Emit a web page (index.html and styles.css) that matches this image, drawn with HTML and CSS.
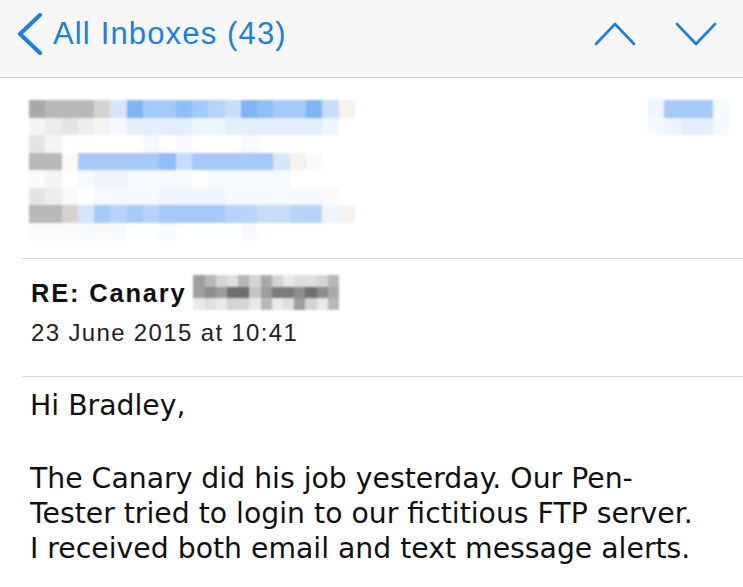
FILE: index.html
```html
<!DOCTYPE html>
<html>
<head>
<meta charset="utf-8">
<link rel="stylesheet" href="styles.css">
</head>
<body>
<header class="topbar">
  <div class="back">
    <svg class="back-icon" width="28" height="42" viewBox="0 0 28 42"><polyline points="24,2 4,21 24,40" fill="none" stroke="#1c7ee6" stroke-width="4" stroke-linecap="round" stroke-linejoin="round"/></svg>
    <span class="back-label">All Inboxes (43)</span>
  </div>
  <div class="nav">
    <svg class="nav-icon" width="42" height="24" viewBox="0 0 42 24"><polyline points="2,22 21,2 40,22" fill="none" stroke="#1c7ee6" stroke-width="2.6" stroke-linecap="round" stroke-linejoin="round"/></svg>
    <svg class="nav-icon" width="42" height="24" viewBox="0 0 42 24"><polyline points="2,2 21,22 40,2" fill="none" stroke="#1c7ee6" stroke-width="2.6" stroke-linecap="round" stroke-linejoin="round"/></svg>
  </div>
</header>

<section class="sender">
  <div class="mosaic left">
    <i class="gA"></i><i class="gB"></i><i class="gB"></i><i class="gB"></i><i class="gC"></i><i class="bF"></i><i class="bA"></i><i class="bC"></i><i class="bC"></i><i class="bB"></i><i class="bC"></i><i class="bD"></i><i class="bE"></i><i class="bA"></i><i class="bB"></i><i class="bC"></i><i class="bC"></i><i class="bA"></i><i class="bE"></i><i class="tA"></i>
    <i class="gF"></i><i class="gE"></i><i class="gD"></i><i class="gE"></i><i class="gF"></i><i class="bI"></i><i class="bG"></i><i class="bG"></i><i class="bG"></i><i class="bG"></i><i class="bH"></i><i class="bH"></i><i class="bG"></i><i class="bG"></i><i class="bG"></i><i class="bG"></i><i class="bG"></i><i class="bG"></i><i class="bH"></i><i></i>
    <i class="gD"></i><i class="gF"></i><i></i><i></i><i></i><i></i><i></i><i class="bI"></i><i></i><i class="bI"></i><i></i><i></i><i></i><i class="bI"></i><i></i><i></i><i></i><i></i><i></i><i></i>
    <i class="gB"></i><i class="gB"></i><i class="gW"></i><i class="bC"></i><i class="bC"></i><i class="bC"></i><i class="bC"></i><i class="bC"></i><i class="bB"></i><i class="bE"></i><i class="bC"></i><i class="bC"></i><i class="bC"></i><i class="bC"></i><i class="bC"></i><i class="bF"></i><i class="tA"></i><i class="gW"></i><i></i><i></i>
    <i class="gW"></i><i class="gF"></i><i></i><i class="bI"></i><i class="bH"></i><i class="bH"></i><i class="bI"></i><i class="bI"></i><i class="bI"></i><i class="bI"></i><i></i><i class="bI"></i><i class="bI"></i><i class="bI"></i><i class="bI"></i><i class="bI"></i><i></i><i></i><i></i><i></i>
    <i class="gD"></i><i class="gE"></i><i class="gW"></i><i></i><i class="bI"></i><i class="bI"></i><i class="bI"></i><i class="bI"></i><i class="bH"></i><i class="bH"></i><i class="bH"></i><i class="bH"></i><i class="bI"></i><i class="bI"></i><i class="bI"></i><i class="bI"></i><i class="bI"></i><i class="bI"></i><i class="gW"></i><i></i>
    <i class="gB"></i><i class="gB"></i><i class="gC"></i><i class="bF"></i><i class="bC"></i><i class="bD"></i><i class="bC"></i><i class="bD"></i><i class="bC"></i><i class="bC"></i><i class="bC"></i><i class="bC"></i><i class="bD"></i><i class="bD"></i><i class="bE"></i><i class="bE"></i><i class="bD"></i><i class="bD"></i><i class="bH"></i><i class="tA"></i>
    <i class="gW"></i><i class="gW"></i><i class="gW"></i><i class="bI"></i><i class="gW"></i><i class="bI"></i><i></i><i></i><i class="bI"></i><i></i><i></i><i></i><i></i><i class="bI"></i><i></i><i></i><i></i><i></i><i></i><i></i>
  </div>
  <div class="mosaic right">
    <i class="bH"></i><i class="bC"></i><i class="bC"></i><i class="bC"></i><i class="bI"></i>
    <i class="bI"></i><i class="bH"></i><i class="bG"></i><i class="bG"></i><i class="bI"></i>
  </div>
</section>
<div class="rule"></div>

<section class="meta">
  <div class="subject-row">
    <h1 class="subject">RE: Canary</h1>
    <div class="mosaic subject-blur">
      <i class="k4"></i><i class="k6"></i><i class="k8"></i><i class="k9"></i><i class="k6"></i><i class="k8"></i><i class="k5"></i><i class="k8"></i><i class="k10"></i><i class="k9"></i><i class="k9"></i><i class="k8"></i><i class="k6"></i>
      <i class="k4"></i><i class="k3"></i><i class="k4"></i><i class="k1"></i><i class="k1"></i><i class="k7"></i><i class="k4"></i><i class="k2"></i><i class="k2"></i><i class="k3"></i><i class="k1"></i><i class="k3"></i><i class="k5"></i>
      <i class="k10"></i><i class="k9"></i><i class="k10"></i><i class="k8"></i><i class="k8"></i><i class="k10"></i><i class="k6"></i><i class="k10"></i><i class="k9"></i><i class="k4"></i><i class="k8"></i><i class="k10"></i><i class="k6"></i>
    </div>
  </div>
  <div class="date">23 June 2015 at 10:41</div>
</section>
<div class="rule"></div>

<section class="message">
  <p>Hi Bradley,</p>
  <p>The Canary did his job yesterday. Our Pen-<br>Tester tried to login to our fictitious FTP server.<br>I received both email and text message alerts.</p>
</section>
</body>
</html>
```

FILE: styles.css
```css
html, body {
  margin: 0;
  padding: 0;
  background: #ffffff;
}
body {
  width: 743px;
  height: 587px;
  overflow: hidden;
  font-family: "Liberation Sans", Arial, sans-serif;
}

.topbar {
  box-sizing: border-box;
  height: 78px;
  padding: 0 26px 10px 16px;
  background: #f7f7f7;
  border-bottom: 1px solid #c8c8cc;
  display: flex;
  align-items: center;
  justify-content: space-between;
}
.back {
  display: flex;
  align-items: center;
  gap: 9px;
}
.back-icon { display: block; }
.back-label {
  font-size: 31px;
  line-height: 36px;
  letter-spacing: 1.15px;
  color: #1c7ee6;
}
.nav {
  display: flex;
  align-items: center;
  gap: 39px;
}
.nav-icon { display: block; }

.sender {
  display: flex;
  align-items: flex-start;
  padding: 22px 0 18px 29px;
}
.mosaic {
  display: grid;
  filter: blur(0.8px);
}
.mosaic i {
  display: block;
  background: #ffffff;
}
.mosaic.left {
  grid-template-columns: repeat(20, 16.3px);
  grid-auto-rows: 17.5px;
}
.mosaic.right {
  margin-left: 293px;
  grid-template-columns: repeat(5, 16.3px);
  grid-auto-rows: 17.5px;
}
.mosaic i.gA { background: #a9a9a9; }
.mosaic i.gB { background: #b9b9b9; }
.mosaic i.gC { background: #d6d3cf; }
.mosaic i.gD { background: #e4e4e4; }
.mosaic i.gE { background: #ececec; }
.mosaic i.gF { background: #f4f4f4; }
.mosaic i.gW { background: #fafafa; }
.mosaic i.bA { background: #7fb4f5; }
.mosaic i.bB { background: #90bef6; }
.mosaic i.bC { background: #a5caf8; }
.mosaic i.bD { background: #b6d4f9; }
.mosaic i.bE { background: #c7defa; }
.mosaic i.bF { background: #d5e6fb; }
.mosaic i.bG { background: #e3eefc; }
.mosaic i.bH { background: #eef5fe; }
.mosaic i.bI { background: #f6f9fe; }
.mosaic i.tA { background: #f6f2ee; }

.rule {
  height: 1px;
  margin-left: 22px;
  background: #dadada;
}

.meta {
  padding: 16px 0 29px 31px;
}
.subject-row {
  display: flex;
  align-items: center;
  gap: 7px;
  height: 35px;
}
.subject {
  margin: 0;
  font-size: 25.5px;
  line-height: 30px;
  font-weight: bold;
  letter-spacing: 1.8px;
  color: #111111;
}
.subject-blur {
  grid-template-columns: repeat(13, 11.2px);
  grid-auto-rows: 11.5px;
}
.mosaic i.k1 { background: #6f6f6f; }
.mosaic i.k2 { background: #7c7c7c; }
.mosaic i.k3 { background: #8c8c8c; }
.mosaic i.k4 { background: #9e9e9e; }
.mosaic i.k5 { background: #a9a9a9; }
.mosaic i.k6 { background: #b7b7b7; }
.mosaic i.k7 { background: #c5c5c5; }
.mosaic i.k8 { background: #d4d4d4; }
.mosaic i.k9 { background: #dfdfdf; }
.mosaic i.k10 { background: #e9e9e9; }

.date {
  margin-top: 9px;
  font-size: 24px;
  line-height: 28px;
  letter-spacing: 1.35px;
  color: #222222;
}

.message {
  padding: 11px 0 0 30px;
  font-family: "DejaVu Sans", sans-serif;
  font-size: 28.3px;
  line-height: 35px;
  color: #111111;
}
.message p {
  margin: 0 0 38px 0;
}
```
